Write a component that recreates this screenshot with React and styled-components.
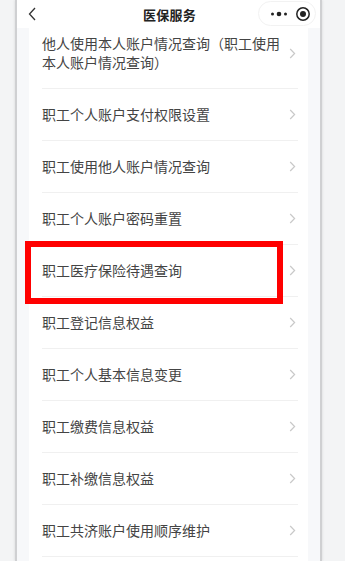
import React from 'react';
import styled, {createGlobalStyle} from "styled-components";

const GlobalStyle = createGlobalStyle`
  html, body {
    margin: 0;
    padding: 0;
    background: #f3f4f5;
    font-family: "Noto Sans CJK SC", "Noto Sans", sans-serif;
  }
`

const items = [
    "他人使用本人账户情况查询（职工使用本人账户情况查询）",
    "职工个人账户支付权限设置",
    "职工使用他人账户情况查询",
    "职工个人账户密码重置",
    "职工医疗保险待遇查询",
    "职工登记信息权益",
    "职工个人基本信息变更",
    "职工缴费信息权益",
    "职工补缴信息权益",
    "职工共济账户使用顺序维护",
];

function Chevron() {
    return (
        <svg width="7" height="11" viewBox="0 0 7 11">
            <path d="M1.2 1 L5.6 5.5 L1.2 10" fill="none" stroke="#c9c9c9" strokeWidth="1.2"/>
        </svg>
    );
}

export default function App() {
    return (
        <>
            <GlobalStyle/>
            <Page>
                <Phone>
                    <NavBar>
                        <BackBtn>
                            <svg width="8" height="14" viewBox="0 0 8 14">
                                <path d="M7 1 L1.5 7 L7 13" fill="none" stroke="#333" strokeWidth="1.3"/>
                            </svg>
                        </BackBtn>
                        <Title>医保服务</Title>
                        <Capsule>
                            <svg width="20" height="6" viewBox="0 0 20 6">
                                <circle cx="3.5" cy="3" r="1.5" fill="#222"/>
                                <circle cx="10" cy="3" r="2.3" fill="#222"/>
                                <circle cx="16.5" cy="3" r="1.5" fill="#222"/>
                            </svg>
                            <svg width="16" height="16" viewBox="0 0 16 16">
                                <circle cx="8" cy="8" r="6.2" fill="none" stroke="#222" strokeWidth="1.5"/>
                                <circle cx="8" cy="8" r="3" fill="#222"/>
                            </svg>
                        </Capsule>
                    </NavBar>
                    <Body>
                        <Card>
                            <List>
                                {items.map((text, index) => (
                                    <Row key={index}>
                                        <RowText>{text}</RowText>
                                        <Chevron/>
                                    </Row>
                                ))}
                            </List>
                        </Card>
                        <Highlight/>
                    </Body>
                </Phone>
            </Page>
        </>
    );
}

const Page = styled.div`
  height: 561px;
  overflow: hidden;
  background: #f3f4f5;
`

const Phone = styled.div`
  margin-left: 15px;
  width: 303px;
  height: 561px;
  border-left: 2px solid #cfd0d2;
  border-right: 2px solid #cfd0d2;
  box-shadow: -1px 0 2px rgba(0, 0, 0, 0.06), 1px 0 2px rgba(0, 0, 0, 0.06);
  background: #f7f8fa;
  display: flex;
  flex-direction: column;
  overflow: hidden;
`

const NavBar = styled.div`
  position: relative;
  z-index: 2;
  height: 28px;
  flex-shrink: 0;
  background: #fff;
  display: flex;
  align-items: center;
  justify-content: center;
`

const BackBtn = styled.div`
  position: absolute;
  left: 11px;
  top: 7px;
  display: flex;
`

const Title = styled.div`
  font-size: 13px;
  font-weight: 700;
  color: #222;
  letter-spacing: 0.3px;
  margin-left: 2px;
`

const Capsule = styled.div`
  position: absolute;
  right: 4px;
  top: 1px;
  width: 58px;
  height: 25px;
  border-radius: 13px;
  border: 1px solid #f2f2f2;
  background: #fff;
  box-sizing: border-box;
  display: flex;
  align-items: center;
  justify-content: space-between;
  padding: 0 4px 0 10px;
`

const Body = styled.div`
  position: relative;
  flex: 1;
  padding: 0 12px;
  overflow: hidden;
`

const Card = styled.div`
  background: #fff;
  height: 100%;
  padding: 0 10px 0 13px;
  overflow: hidden;
`

const List = styled.div`
  margin-top: -10px;
`

const Row = styled.div`
  display: flex;
  align-items: center;
  justify-content: space-between;
  padding: 16px 0;
  border-bottom: 1px solid #f0f0f0;
  gap: 8px;
  svg {
    flex-shrink: 0;
    margin-right: 2px;
  }
`

const RowText = styled.div`
  font-size: 14px;
  line-height: 19px;
  color: #444;
`

const Highlight = styled.div`
  position: absolute;
  left: 8px;
  top: 213px;
  width: 246px;
  height: 51px;
  border: 6px solid #ff0000;
  pointer-events: none;
`
